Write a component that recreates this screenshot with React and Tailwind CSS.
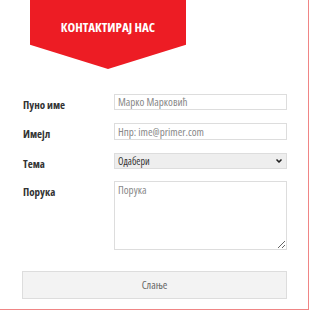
import { ChevronDown } from "lucide-react";

const font = "font-['Open_Sans',sans-serif] font-stretch-condensed";

function Row({ label, children, className = "" }) {
  return (
    <div className={`flex items-start ${className}`}>
      <label className="w-[91px] shrink-0 pt-[3px] text-[11px] font-bold text-[#333] leading-[16px]">
        {label}
      </label>
      <div className="w-[173px]">{children}</div>
    </div>
  );
}

export default function App() {
  return (
    <div className={`w-[310px] h-[311px] bg-white overflow-hidden ${font}`}>
      <div className="w-[309px] h-[310px] border-r border-b border-[#f08585]">
        <div className="ml-[30px] w-[156px] h-[69px] bg-[#ed1c24] [clip-path:polygon(0_0,100%_0,100%_65%,50%_100%,0_65%)] flex justify-center pt-[19px]">
          <h1 className="text-white font-bold text-[13px] leading-[16px]">
            КОНТАКТИРАЈ НАС
          </h1>
        </div>

        <form className="pl-[23px] pt-[25px]" onSubmit={(e) => e.preventDefault()}>
          <Row label="Пуно име">
            <input
              className="block w-full h-[16px] border border-[#ddd] px-[3px] text-[11px] text-[#888] placeholder:text-[#888] outline-none"
              placeholder="Марко Марковић"
            />
          </Row>
          <Row label="Имејл" className="mt-[10px]">
            <input
              className="block w-full h-[17px] border border-[#ddd] px-[3px] text-[11px] text-[#888] placeholder:text-[#888] outline-none"
              placeholder="Нпр: ime@primer.com"
            />
          </Row>
          <Row label="Тема" className="mt-[11px]">
            <div className="relative">
              <select className="block w-full h-[16px] appearance-none bg-[#eee] border border-[#ddd] px-[3px] text-[10px] text-[#333] leading-[14px] outline-none">
                <option>Одабери</option>
              </select>
              <ChevronDown
                className="absolute right-[4px] top-[4px] w-[8px] h-[8px] text-[#222] pointer-events-none"
                strokeWidth={5}
              />
            </div>
          </Row>
          <Row label="Порука" className="mt-[9px]">
            <textarea
              className="block w-full h-[69px] border border-[#ddd] px-[3px] py-0 text-[11px] text-[#888] placeholder:text-[#888] outline-none"
              placeholder="Порука"
            />
          </Row>
          <button
            type="submit"
            className="block mt-[21px] -ml-[1px] w-[265px] h-[28px] bg-[#f3f3f3] border border-[#ddd] text-[11px] text-[#666]"
          >
            Слање
          </button>
        </form>
      </div>
    </div>
  );
}
